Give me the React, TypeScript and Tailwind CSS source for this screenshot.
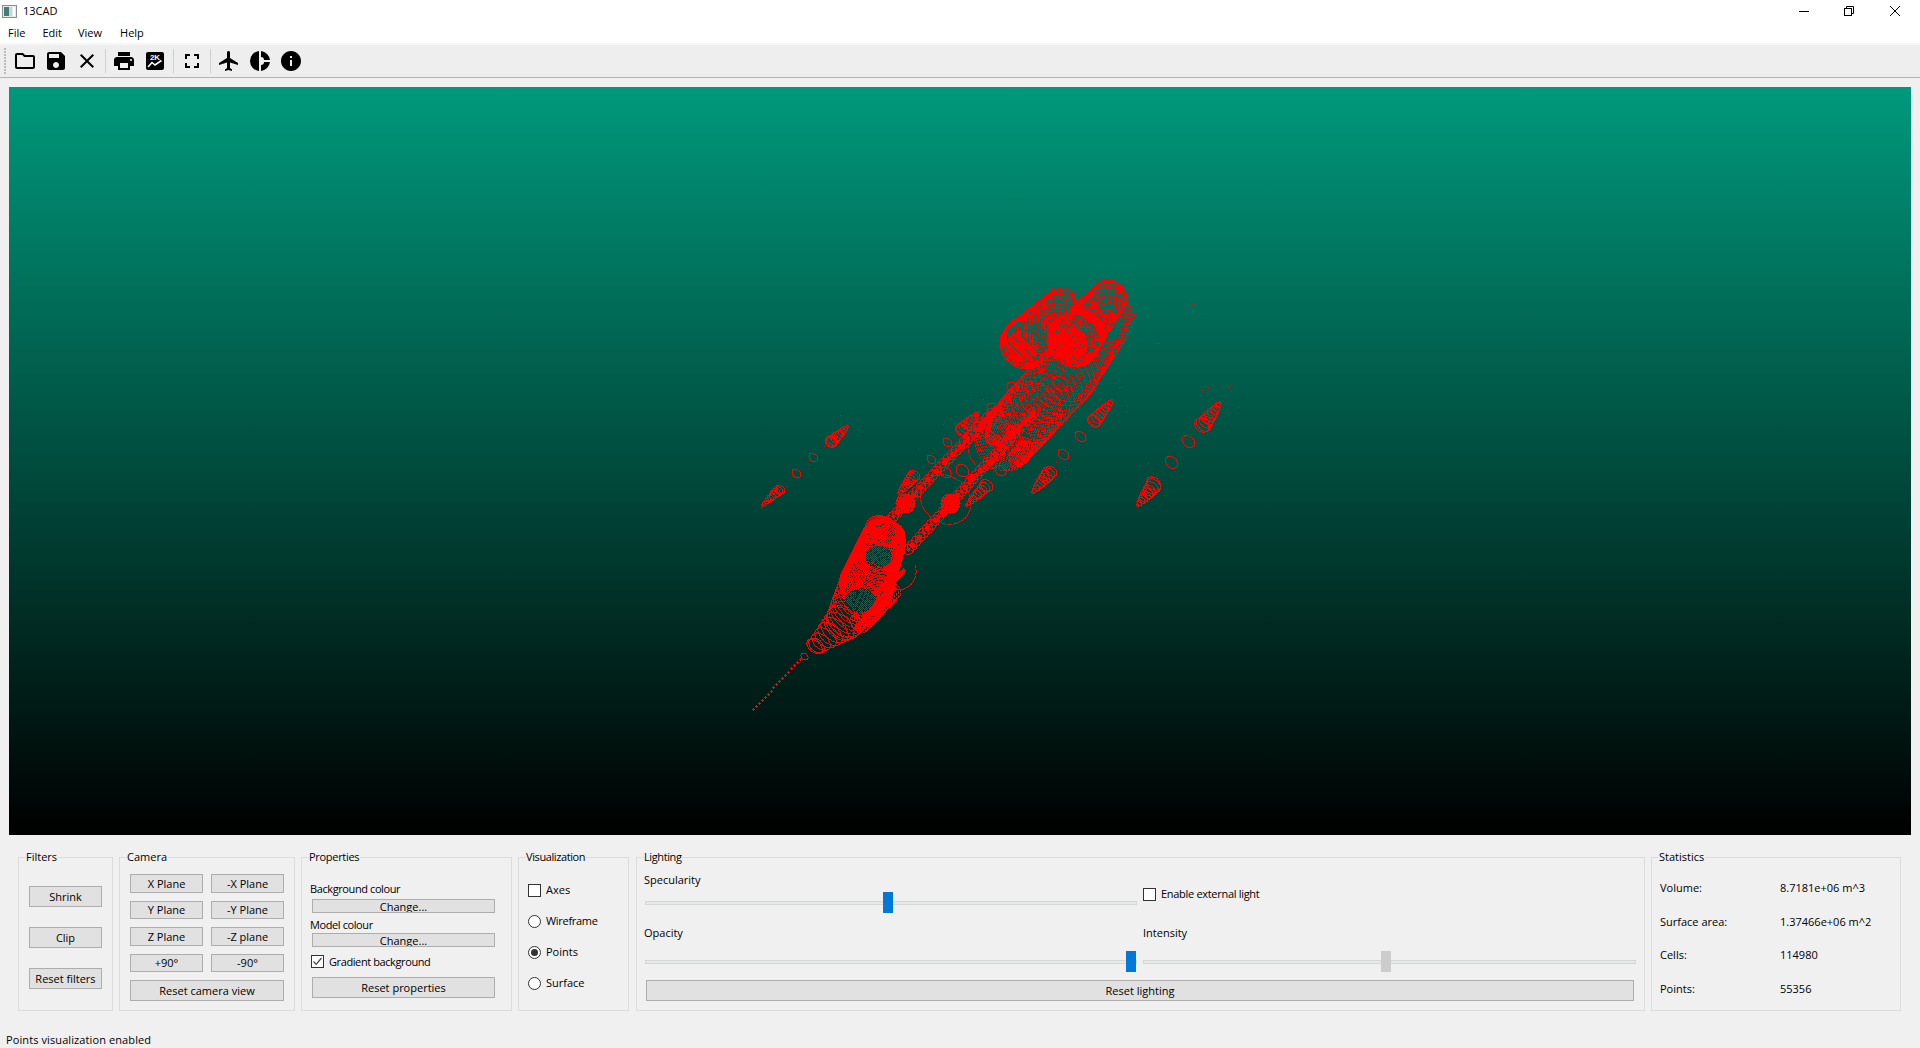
import React from "react";
import { MdOutlineFolder, MdSave, MdClose, MdPrint, MdFullscreen, MdFlight, MdInfo } from "react-icons/md";

const AX = (41 * Math.PI) / 180;

function buildModel() {
  const set = new Set<string>();
  const add = (x: number, y: number) => set.add(Math.round(x) + "," + Math.round(y));
  const ring = (cx: number, cy: number, r: number, ratio = 0.65, step = 1.5, from = 0, to = Math.PI * 2, a = AX) => {
    const len = Math.max(6, Math.floor(((to - from) * r) / step));
    for (let i = 0; i < len; i++) {
      const t = from + ((to - from) * i) / len;
      const px = r * Math.cos(t);
      const py = r * ratio * Math.sin(t);
      add(cx + px * Math.cos(a) - py * Math.sin(a), cy + px * Math.sin(a) + py * Math.cos(a));
    }
  };
  const tube = (x1: number, y1: number, r1: number, x2: number, y2: number, r2: number, n: number, ratio = 0.65, step = 1.5) => {
    for (let i = 0; i <= n; i++) {
      const k = i / n;
      ring(x1 + (x2 - x1) * k, y1 + (y2 - y1) * k, r1 + (r2 - r1) * k, ratio, step);
    }
  };
  const disk = (cx: number, cy: number, r: number, holes = 0) => {
    for (let x = -r; x <= r; x++)
      for (let y = -r; y <= r; y++)
        if (x * x + y * y <= r * r && !(holes > 0 && (x * 3 + y * 7 + 400) % holes === 0)) add(cx + x, cy + y);
  };
  const bar = (x1: number, y1: number, x2: number, y2: number, r: number, spacing = 1) => {
    const d = Math.hypot(x2 - x1, y2 - y1);
    const n = Math.floor(d / spacing);
    for (let i = 0; i <= n; i++) disk(x1 + ((x2 - x1) * i) / n, y1 + ((y2 - y1) * i) / n, r);
  };
  // punches a mottled dark patch into an area already filled with points
  const thin = (cx: number, cy: number, rx: number, ry: number, mod: number) => {
    for (let x = -rx; x <= rx; x++)
      for (let y = -ry; y <= ry; y++)
        if ((x * x) / (rx * rx) + (y * y) / (ry * ry) <= 1 && (x * 5 + y * 3 + 900) % mod === 0)
          set.delete(Math.round(cx + x) + "," + Math.round(cy + y));
  };

  // engine capsules
  tube(1060, 305, 17, 1026, 343, 26, 30, 0.95, 1.9);
  tube(1030, 338, 25, 1024, 344, 25, 6, 0.95, 1);
  ring(1060, 303, 17, 0.95, 1);
  ring(1060, 303, 15, 0.95, 1);
  ring(1058, 300, 9, 0.9, 1.6);
  tube(1108, 298, 18, 1074, 338, 27, 30, 0.95, 1.9);
  ring(1108, 298, 19, 0.95, 1);
  ring(1108, 298, 17, 0.95, 1);
  tube(1112, 318, 23, 1068, 372, 30, 30, 0.95, 2.3);
  tube(1080, 332, 24, 1073, 340, 27, 8, 0.95, 1);
  disk(1070, 344, 17, 5);
  disk(1022, 346, 16, 5);
  thin(1034, 330, 14, 14, 3);
  thin(1062, 305, 10, 9, 3);
  thin(1106, 298, 10, 9, 3);

  // centre body
  tube(1068, 372, 31, 1032, 410, 31, 9, 0.9, 1.5);
  tube(1032, 410, 31, 1003, 442, 30, 22, 0.9, 1.7);
  ring(1060, 383, 8, 0.8, 1.4);
  tube(1002, 424, 14, 994, 436, 10, 8, 0.9, 1.2);
  tube(1025, 448, 8, 1015, 458, 8, 8, 0.9, 1.1);

  // pylons
  const beads = (x1: number, y1: number, x2: number, y2: number) => {
    const d = Math.hypot(x2 - x1, y2 - y1);
    const n = Math.floor(d / 5.5);
    for (let i = 0; i <= n; i++) {
      const x = x1 + ((x2 - x1) * i) / n;
      const y = y1 + ((y2 - y1) * i) / n;
      ring(x, y, 5, 0.95, 1);
      disk(x, y, i % 2 ? 2 : 3);
    }
  };
  beads(991, 413, 889, 520);
  beads(1033, 412, 908, 549);
  bar(1033, 412, 1012, 434, 2);
  disk(905, 503, 10, 9);
  disk(950, 503, 10, 9);

  // thin rings
  ring(945, 499, 27, 0.85, 1.3);
  ring(985, 452, 18, 0.85, 1.3);
  ring(1000, 470, 6, 0.8, 1);
  ring(1012, 387, 6, 0.8, 1);
  ring(992, 408, 6, 0.8, 1);
  ring(896, 570, 20, 0.95, 1.2, -1, 1.5);
  ring(962, 470, 7, 0.8, 1);
  ring(945, 472, 6, 0.8, 1.2);

  // small pods
  const cone = (tx: number, ty: number, bx: number, by: number, r: number) => {
    const n = 8;
    for (let i = 0; i <= n; i++) {
      const k = i / n;
      ring(tx + (bx - tx) * k, ty + (by - ty) * k, 0.8 + (r - 0.8) * Math.pow(k, 0.6), 0.7, 0.9);
    }
  };
  const pods: number[][] = [
    [847, 426, 830, 442, 6],
    [762, 505, 778, 490, 5],
    [1112, 400, 1094, 420, 7],
    [1032, 492, 1048, 473, 7],
    [1220, 402, 1203, 424, 8],
    [1137, 505, 1153, 485, 8],
    [978, 412, 962, 429, 7],
    [898, 493, 912, 477, 6],
    [966, 505, 984, 487, 6],
  ];
  pods.forEach((p) => cone(p[0], p[1], p[2], p[3], p[4]));
  const rings: number[][] = [
    [813, 457, 5], [796, 473, 5], [1080, 436, 6], [1063, 454, 6], [1188, 441, 7], [1171, 462, 7], [947, 442, 5], [931, 459, 5],
    [831, 441, 6], [780, 489, 5], [1093, 421, 7], [1051, 471, 6], [1201, 425, 8], [1153, 483, 8], [961, 430, 7], [914, 475, 6], [986, 485, 7],
  ];
  rings.forEach((p) => ring(p[0], p[1], p[2], 0.72, 1));

  // nose
  tube(883, 540, 23, 866, 585, 28, 34, 0.9, 1.05);
  tube(880, 530, 16, 892, 534, 13, 8, 0.9, 1);
  thin(878, 556, 13, 11, 2);
  tube(866, 585, 28, 843, 622, 19, 10, 0.8, 1.3);
  tube(843, 622, 19, 816, 645, 9, 6, 0.65, 1.1);
  ring(814, 646, 9, 0.6, 1);
  tube(890, 590, 11, 860, 622, 11, 16, 0.8, 1.5);
  thin(860, 600, 16, 12, 2);
  bar(903, 570, 860, 622, 2);
  bar(885, 600, 855, 628, 2);
  ring(804, 656, 4, 0.7, 1);
  for (let i = 0; i < 17; i++) disk(800 - i * 2.95, 659 + i * 3.15, 1);

  // stray points
  const stray: number[][] = [
    [1165, 240], [1167, 240], [1151, 256], [1153, 256], [1033, 263], [1034, 263], [1018, 277], [1020, 277],
    [1197, 295], [1198, 299], [1192, 304], [1194, 303], [1198, 305], [1157, 343], [1159, 343], [1119, 388], [1121, 387],
    [1095, 390], [1101, 388], [1127, 405], [1126, 411], [1202, 390], [1208, 388], [1228, 387], [1230, 386], [1238, 407], [1237, 413],
    [833, 417], [840, 415], [851, 413], [859, 430], [858, 435], [965, 400], [971, 398], [983, 399], [987, 397], [943, 424], [959, 433], [918, 449],
    [787, 486], [761, 507], [824, 446], [809, 465], [1052, 431], [1075, 416], [1065, 470], [1056, 462], [1164, 495], [1148, 463], [1157, 478],
  ];
  stray.forEach((p) => add(p[0], p[1]));

  let d = "";
  set.forEach((k) => {
    const [x, y] = k.split(",");
    d += "M" + x + " " + y + "h1v1h-1z";
  });
  return d;
}

const modelPath = buildModel();

function Btn({ className, children }: { className: string; children: React.ReactNode }) {
  return (
    <div className={"flex items-center justify-center bg-[#e1e1e1] border border-[#adadad] text-black " + className}>{children}</div>
  );
}

function Group({ title, className, titleClass = "", children }: { title: string; className: string; titleClass?: string; children: React.ReactNode }) {
  return (
    <fieldset className={"h-[162px] border border-[#dcdcdc] shrink-0 " + className}>
      <legend className={"ml-[7px] pr-[1px] h-[16px] leading-[16px] " + titleClass}>{title}</legend>
      {children}
    </fieldset>
  );
}

function Check({ checked }: { checked?: boolean }) {
  return (
    <span className="w-[13px] h-[13px] border border-[#333333] bg-white flex items-center justify-center shrink-0">
      {checked && (
        <svg width="11" height="11" viewBox="0 0 11 11" fill="none">
          <path d="M1.5 5.5 L4.2 8.3 L9.5 2" stroke="#444444" strokeWidth="1.2" />
        </svg>
      )}
    </span>
  );
}

function Radio({ checked }: { checked?: boolean }) {
  return (
    <span className="w-[13px] h-[13px] rounded-full border border-[#333333] bg-white flex items-center justify-center shrink-0">
      {checked && <span className="w-[7px] h-[7px] rounded-full bg-[#333333]" />}
    </span>
  );
}

function Slider({ className, handle }: { className: string; handle: string }) {
  return (
    <div className={"relative h-[21px] flex items-center " + className}>
      <div className="w-full h-[4px] bg-[#e7eaea] border border-[#d6d6d6]" />
      <div className={"absolute top-0 w-[10px] h-[21px] " + handle} />
    </div>
  );
}

function Sep() {
  return <div className="w-px h-[24px] bg-[#cfcfcf] mx-[6px]" />;
}

function Tool({ children }: { children: React.ReactNode }) {
  return <div className="w-[24px] h-[24px] flex items-center justify-center text-black">{children}</div>;
}

export default function App() {
  return (
    <div className="w-[1920px] h-[1048px] overflow-hidden flex flex-col bg-[#f0f0f0] text-[11px] leading-[16px] text-black font-['Open_Sans',sans-serif]">
      {/* title bar */}
      <div className="h-[22px] bg-white flex items-center shrink-0">
        <svg className="ml-[2px]" width="15" height="13" viewBox="0 0 15 13">
          <rect x="0.5" y="0.5" width="14" height="12" fill="#e8e8e8" stroke="#8a8f94" />
          <rect x="2" y="2" width="5" height="9" fill="#3f7f78" />
          <rect x="7" y="2" width="3" height="9" fill="#c9d8d4" />
          <rect x="11" y="2" width="2" height="9" fill="#ffffff" />
        </svg>
        <span className="ml-[6px]">13CAD</span>
        <div className="ml-auto flex items-center h-full">
          <svg className="mr-[35px]" width="10" height="10" viewBox="0 0 10 10"><path d="M0 5.5H10" stroke="#000" /></svg>
          <svg className="mr-[36px]" width="10" height="10" viewBox="0 0 10 10" fill="none" stroke="#000">
            <rect x="0.5" y="2.5" width="7" height="7" />
            <path d="M2.5 2.5V0.5H9.5V7.5H7.5" />
          </svg>
          <svg className="mr-[20px]" width="10" height="10" viewBox="0 0 10 10" stroke="#000"><path d="M0 0L10 10M10 0L0 10" /></svg>
        </div>
      </div>
      {/* menu */}
      <div className="h-[21px] bg-white flex items-center shrink-0">
        <span className="ml-[8px]">File</span>
        <span className="ml-[17px]">Edit</span>
        <span className="ml-[16px]">View</span>
        <span className="ml-[18px]">Help</span>
      </div>
      <div className="h-[2px] bg-[#f6f6f6] shrink-0" />
      {/* toolbar */}
      <div className="h-[33px] bg-[#eeeeee] border-b border-[#b4b4b4] flex items-center shrink-0 pl-[4px]">
        <div className="flex flex-col gap-[1px] w-[2px] mr-[7px]">
          {[0, 1, 2, 3, 4, 5, 6, 7, 8].map((i) => (
            <span key={i} className="w-[2px] h-[2px] bg-[#bcbcbc]" />
          ))}
        </div>
        <div className="flex items-center gap-[7px]">
          <Tool><MdOutlineFolder size={24} /></Tool>
          <Tool><MdSave size={24} /></Tool>
          <Tool><MdClose size={24} /></Tool>
        </div>
        <Sep />
        <div className="flex items-center gap-[7px]">
          <Tool><MdPrint size={24} /></Tool>
          <Tool>
            <svg width="24" height="24" viewBox="0 0 24 24">
              <rect x="3" y="3" width="18" height="18" rx="2" fill="#000" />
              <text x="12" y="11" fontSize="8" fontWeight="700" fill="#fff" textAnchor="middle" fontFamily="Liberation Sans, sans-serif">2K</text>
              <path d="M5 18L9 13.5L12 16L18.5 11.5" stroke="#fff" strokeWidth="1.6" fill="none" />
            </svg>
          </Tool>
        </div>
        <Sep />
        <Tool><MdFullscreen size={24} /></Tool>
        <Sep />
        <div className="flex items-center gap-[7px]">
          <Tool><MdFlight size={24} /></Tool>
          <Tool>
            <svg width="24" height="24" viewBox="0 0 24 24">
              <path d="M11 2.05V21.95A10 10 0 0 1 11 2.05Z" fill="#000" />
              <path d="M13 2.05A10 10 0 0 1 21.95 11H16A3 3 0 0 0 13 8Z" fill="#000" />
              <path d="M21.95 13A10 10 0 0 1 13 21.95V16A3 3 0 0 0 16 13Z" fill="#000" />
            </svg>
          </Tool>
          <Tool><MdInfo size={24} /></Tool>
        </div>
      </div>
      {/* viewport */}
      <div className="px-[9px] pt-[9px] shrink-0">
        <div className="h-[748px] bg-[linear-gradient(to_bottom,#00997c,#000000)]">
          <svg className="block w-full h-full" viewBox="9 87 1902 748" shapeRendering="crispEdges">
            <path d={modelPath} fill="#ff0000" />
          </svg>
        </div>
      </div>
      {/* controls */}
      <div className="flex pt-[14px] pl-[18px] shrink-0">
        <Group title="Filters" className="w-[95px] mr-[6px]">
          <div className="flex flex-col gap-[20px] pl-[10px] pt-[21px]">
            <Btn className="w-[73px] h-[21px]">Shrink</Btn>
            <Btn className="w-[73px] h-[21px]">Clip</Btn>
            <Btn className="w-[73px] h-[21px]">Reset filters</Btn>
          </div>
        </Group>
        <Group title="Camera" className="w-[176px] mr-[6px]">
          <div className="pl-[10px] pt-[9px] w-[164px]">
            <div className="grid grid-cols-2 gap-x-[8px] gap-y-[8px] grid-rows-[19px_18px_19px_18px]">
              <Btn className="h-full">X Plane</Btn>
              <Btn className="h-full">-X Plane</Btn>
              <Btn className="h-full">Y Plane</Btn>
              <Btn className="h-full">-Y Plane</Btn>
              <Btn className="h-full">Z Plane</Btn>
              <Btn className="h-full">-Z plane</Btn>
              <Btn className="h-full">+90°</Btn>
              <Btn className="h-full">-90°</Btn>
            </div>
            <Btn className="mt-[8px] h-[21px]">Reset camera view</Btn>
          </div>
        </Group>
        <Group title="Properties" titleClass="tracking-[-0.3px]" className="w-[211px] mr-[6px]">
          <div className="pl-[8px] pt-[16px]">
            <div className="h-[16px] tracking-[-0.4px]">Background colour</div>
            <Btn className="mt-[2px] ml-[2px] w-[183px] h-[14px] overflow-hidden items-start"><span className="mt-[-1px]">Change...</span></Btn>
            <div className="mt-[4px] h-[16px] tracking-[-0.4px]">Model colour</div>
            <Btn className="ml-[2px] w-[183px] h-[14px] overflow-hidden items-start"><span className="mt-[-1px]">Change...</span></Btn>
            <div className="mt-[8px] h-[13px] flex items-center gap-[5px] ml-[1px]"><Check checked /><span className="tracking-[-0.4px]">Gradient background</span></div>
            <Btn className="mt-[9px] ml-[2px] w-[183px] h-[21px]">Reset properties</Btn>
          </div>
        </Group>
        <Group title="Visualization" titleClass="tracking-[-0.4px]" className="w-[111px] mr-[7px]">
          <div className="flex flex-col gap-[15px] pt-[17px] pl-[9px]">
            <div className="h-[16px] flex items-center gap-[5px]"><Check /><span>Axes</span></div>
            <div className="h-[16px] flex items-center gap-[5px]"><Radio /><span className="tracking-[-0.3px]">Wireframe</span></div>
            <div className="h-[16px] flex items-center gap-[5px]"><Radio checked /><span>Points</span></div>
            <div className="h-[16px] flex items-center gap-[5px]"><Radio /><span>Surface</span></div>
          </div>
        </Group>
        <Group title="Lighting" titleClass="tracking-[-0.4px]" className="w-[1009px] mr-[6px]">
          <div className="pl-[7px] flex gap-[6px]">
            <div className="w-[493px] pt-[7px]">
              <div className="h-[16px]">Specularity</div>
              <Slider className="mt-[4px] ml-[1px]" handle="left-[238px] bg-[#0078d7]" />
              <div className="mt-[12px] h-[16px]">Opacity</div>
              <Slider className="mt-[10px] ml-[1px]" handle="left-[481px] bg-[#0078d7]" />
            </div>
            <div className="w-[493px] pt-[21px]">
              <div className="h-[16px] flex items-center gap-[5px]"><Check /><span className="tracking-[-0.3px]">Enable external light</span></div>
              <div className="mt-[23px] h-[16px]">Intensity</div>
              <Slider className="mt-[10px]" handle="left-[238px] bg-[#cccccc]" />
            </div>
          </div>
          <Btn className="mt-[8px] ml-[9px] w-[988px] h-[21px]">Reset lighting</Btn>
        </Group>
        <Group title="Statistics" className="w-[250px]">
          <div className="grid grid-cols-[120px_1fr] grid-rows-[34px_33px_34px_16px] pl-[8px] pt-[15px]">
            <div className="h-[16px]">Volume:</div><div className="h-[16px]">8.7181e+06 m^3</div>
            <div className="h-[16px]">Surface area:</div><div className="h-[16px]">1.37466e+06 m^2</div>
            <div className="h-[16px]">Cells:</div><div className="h-[16px]">114980</div>
            <div className="h-[16px]">Points:</div><div className="h-[16px]">55356</div>
          </div>
        </Group>
      </div>
      {/* status */}
      <div className="mt-auto h-[16px] pl-[6px] leading-[16px] tracking-[0.1px]">Points visualization enabled</div>
    </div>
  );
}
